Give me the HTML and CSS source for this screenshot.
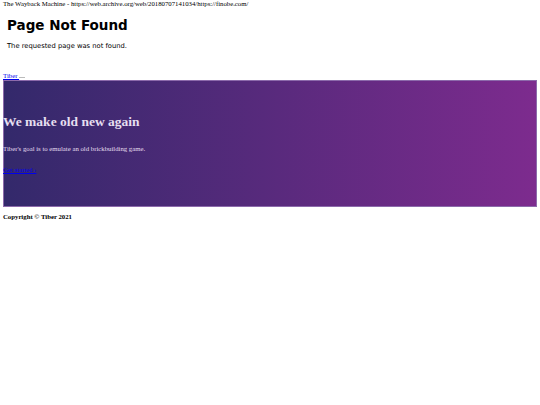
FILE: index.html
```html
<!DOCTYPE html>
<html>
<head>
<meta charset="utf-8">
<link rel="stylesheet" href="styles.css">
</head>
<body>
<div class="wb">The Wayback Machine - https://web.archive.org/web/20180707141034/https://finobe.com/</div>
<div class="err">
  <h1 class="err-title">Page Not Found</h1>
  <p class="err-text">The requested page was not found.</p>
</div>
<div class="nav"><a href="#" class="brand">Tiber <span class="brand-img"></span></a></div>
<section class="hero">
  <h2 class="hero-title">We make old new again</h2>
  <p class="hero-text">Tiber's goal is to emulate an old brickbuilding game.</p>
  <p class="hero-link"><a href="#">Get started ›</a></p>
</section>
<footer class="foot">Copyright © Tiber 2021</footer>
</body>
</html>
```
FILE: styles.css
```css
html, body { margin: 0; padding: 0; background: #fff; }
body {
  padding: 0 3px;
  font-family: "Liberation Serif", "Times New Roman", serif;
  font-size: 6.75px;
  color: #000;
}
.wb { line-height: 7px; height: 8px; }
.err { padding: 0 4px; margin-top: 9px; }
.err-title {
  font-family: "DejaVu Sans", sans-serif;
  font-weight: bold;
  font-size: 13.5px;
  line-height: 16px;
  margin: 0;
}
.err-text {
  font-family: "DejaVu Sans", sans-serif;
  font-size: 6.75px;
  line-height: 8px;
  margin: 9px 0 0;
}
.nav { margin-top: 22px; line-height: 8px; height: 8px; }
.brand { color: #0000ee; }
.brand-img { display: inline-block; width: 6px; height: 1px; background: #bbb; vertical-align: baseline; }
.hero {
  border: 1px solid #8c6aab;
  background: linear-gradient(to right, #33296b, #7d2b8e);
  color: #e6dff0;
  padding-top: 33px;
  box-sizing: border-box;
  height: 127px;
}
.hero-title {
  font-size: 13.5px;
  font-weight: bold;
  margin: 0 0 0 -1px;
  line-height: 16px;
}
.hero-text { margin: 15px 0 0 -1px; line-height: 8px; }
.hero-link { margin: 13px 0 0 -1px; line-height: 8px; }
.hero-link a { color: #0000ee; }
.foot { font-weight: bold; margin-top: 6px; line-height: 8px; }
```
